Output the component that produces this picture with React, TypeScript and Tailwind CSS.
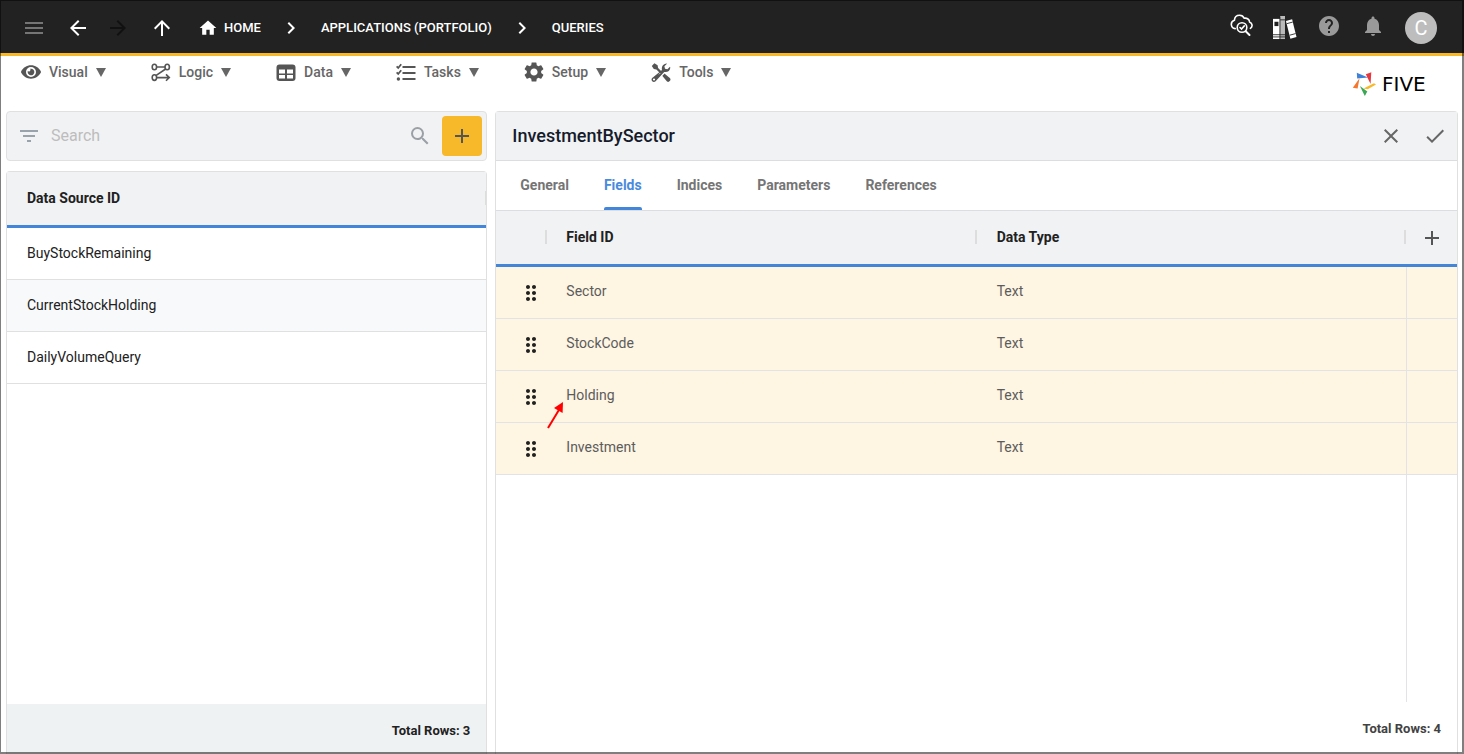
import React, { useState } from "react";
import {
  MdAdd,
  MdArrowBack,
  MdArrowForward,
  MdArrowUpward,
  MdCheck,
  MdChevronRight,
  MdClose,
  MdDragIndicator,
  MdFilterList,
  MdHelp,
  MdHome,
  MdMenu,
  MdNotifications,
  MdSearch,
  MdSettings,
} from "react-icons/md";
import { FaEye } from "react-icons/fa";

interface Field {
  id: string;
  type: string;
}

const dataSources = ["BuyStockRemaining", "CurrentStockHolding", "DailyVolumeQuery"];

const fields: Field[] = [
  { id: "Sector", type: "Text" },
  { id: "StockCode", type: "Text" },
  { id: "Holding", type: "Text" },
  { id: "Investment", type: "Text" },
];

const tabs = ["General", "Fields", "Indices", "Parameters", "References"];

const LogicIcon = () => (
  <svg viewBox="0 0 20 20" className="size-5" fill="none" stroke="currentColor" strokeWidth="1.6">
    <ellipse cx="3.4" cy="5" rx="2.2" ry="2.8" />
    <ellipse cx="16.2" cy="5" rx="2.2" ry="2.8" />
    <ellipse cx="3.4" cy="15.6" rx="2.2" ry="2.8" />
    <path d="M5.6 5h8.4M14.6 7L5.2 13.400M5.6 15.600h12.600M15 12.400L18.300 15.600l-3.300 3.200" />
  </svg>
);

const TableIcon = () => (
  <svg viewBox="0 0 20 20" className="size-5">
    <rect x=".5" y="2.500" width="19" height="16.500" rx="3" fill="currentColor" />
    <path d="M3 7.500h6v4H3zM11 7.500h6v4h-6zM3 13h6v3.500H3zM11 13h6v3.500h-6z" fill="#fff" />
  </svg>
);

const TasksIcon = () => (
  <svg viewBox="0 0 20 20" className="size-5" fill="none" stroke="currentColor">
    <path d="M6.500 5H19.500M6.500 11H19.500M6.500 17H19.500" strokeWidth="2.200" />
    <path d="M.6 4.400l1.600 1.600 3-3.800M.6 10.400l1.600 1.600 3-3.800" strokeWidth="1.800" />
    <circle cx="2.400" cy="17" r="1.700" fill="currentColor" stroke="none" />
  </svg>
);

const ToolsIcon = () => (
  <svg viewBox="0 0 20 20" className="size-5" fill="currentColor">
    <path d="M.8 3.900L3.400 1.300l3.200 2 .5 2.600 4 4-1.700 1.700-4-4-2.600-.5z" />
    <path d="M11.200 13.700l2.200-2.200 5.400 4.600a2.200 2.200 0 0 1-3 3.200z" />
    <path d="M1.200 16.100L11 8.100c-.8-3 .8-6 4.200-6.600l.8.200-2.600 2.600.6 2.400 2.400.6 2.600-2.600.3 1c-.2 3-3 5-6.100 4.200L4.600 19.300c-2.400 2-5.400-1-3.400-3.200z" />
    <path d="M8 12.300l1.200-1.200M10.500 14l2.600-2.600" stroke="#fff" strokeWidth=".8" />
    <circle cx="3" cy="17.500" r="1.100" fill="#fff" />
  </svg>
);

const CloudSearchIcon = () => (
  <svg viewBox="0 0 24 24" className="size-6" fill="none" stroke="currentColor" strokeWidth="1.6" strokeLinecap="round">
    <path d="M6.200 14.600A4.300 4.300 0 0 1 5.400 6.200C5.600 3.200 7.800 1.200 10.600 1.200c2.200 0 3.800 1.200 4.600 3C18.200 3.800 20.400 5.400 20.600 8c2.800 1.200 3.400 4.600.8 6.400" />
    <circle cx="13" cy="13.500" r="4.800" />
    <path d="M16.700 17.200l3.800 3.800" strokeWidth="2" />
    <path d="M11 13.500l1.500 1.600 2.800-3.200" />
  </svg>
);

const BooksIcon = () => (
  <svg viewBox="1 1 25 25" className="size-6" fill="currentColor">
    <path d="M1 4h7v21H1z" />
    <path d="M8.500 1h5v24h-5z" fill="#bbb" />
    <path d="M14.500 6.200l6.400-1.700 4.600 18.300-6.400 1.900z" />
    <path d="M2.500 7h4.200v4.500H2.500z" fill="#222" />
    <path d="M1 20.500h12.500M1 22.800h12.500M8.500 5h5M15.300 9l6.300-1.700M18.400 21l6.200-1.700" stroke="#222" strokeWidth=".9" />
    <path d="M8.200 2v23M14 2v23" stroke="#222" strokeWidth=".6" />
  </svg>
);

const FiveLogo = () => (
  <div className="flex items-center gap-1.5">
    <svg viewBox="0 0 24 24" className="size-6">
      <path d="M4.800.8L16 5.400 5.200 6.400z" fill="#3f80d8" />
      <path d="M19.300.2L18.600 12l-4.800-9.800z" fill="#e5393f" />
      <path d="M24 12.600l-8.300 4.600-4.200-.6L22 11.200z" fill="#f7b829" />
      <path d="M12.800 24L7.900 14l7.400 5.600z" fill="#3aa757" />
      <path d="M.8 15.800L7.500 6.200 5.600 16.500z" fill="#f4772e" />
    </svg>
    <span className="w-15 font-['DejaVu_Sans',sans-serif] text-xl leading-6 text-black">FIVE</span>
  </div>
);

const menus = [
  { label: "Visual", icon: <FaEye className="size-5" /> },
  { label: "Logic", icon: <LogicIcon /> },
  { label: "Data", icon: <TableIcon /> },
  { label: "Tasks", icon: <TasksIcon /> },
  { label: "Setup", icon: <MdSettings className="-mx-0.5 size-6" /> },
  { label: "Tools", icon: <ToolsIcon /> },
];

const Header = () => (
  <header className="flex h-14 shrink-0 items-center justify-between border-b-3 border-[#f7b829] bg-[#222222] pt-0.5 pr-6.75 pl-5.5 text-white">
    <nav className="flex items-center text-[13px] font-medium">
      <button aria-label="Menu" className="mr-5 text-[#757575]">
        <MdMenu className="size-6" />
      </button>
      <button aria-label="Back" className="mr-4">
        <MdArrowBack className="size-6" />
      </button>
      <button aria-label="Forward" className="mr-5 text-[#111111]" disabled>
        <MdArrowForward className="size-6" />
      </button>
      <button aria-label="Up" className="mr-6">
        <MdArrowUpward className="size-6" />
      </button>
      <a href="#home" className="flex items-center gap-1.5">
        <MdHome className="size-5" />
        HOME
      </a>
      <MdChevronRight className="mx-4.5 size-6" />
      <a href="#applications">APPLICATIONS (PORTFOLIO)</a>
      <MdChevronRight className="mx-4.5 size-6" />
      <a href="#queries">QUERIES</a>
    </nav>
    <div className="flex items-center gap-5">
      <button aria-label="Inspect" className="pb-1">
        <CloudSearchIcon />
      </button>
      <button aria-label="Library">
        <BooksIcon />
      </button>
      <button aria-label="Help" className="pb-1 text-[#999999]">
        <MdHelp className="size-6" />
      </button>
      <button aria-label="Notifications" className="pb-1 text-[#999999]">
        <MdNotifications className="size-6" />
      </button>
      <button className="size-8 rounded-full bg-[#bdbdbd] text-xl leading-8">C</button>
    </div>
  </header>
);

const MenuBar = () => (
  <div className="flex h-13.75 shrink-0 justify-between pr-5.5 pl-5.25">
    <div className="flex h-8 items-center gap-11.25">
      {menus.map((menu) => (
        <button key={menu.label} className="flex items-center gap-2 text-sm font-medium text-[#666666]">
          <span className="text-[#555555]">{menu.icon}</span>
          {menu.label}
          <svg viewBox="0 0 10 9" className="h-2.25 w-2.5" fill="currentColor">
            <path d="M0 0h10L5 9z" />
          </svg>
        </button>
      ))}
    </div>
    <div className="pt-4">
      <FiveLogo />
    </div>
  </div>
);

const DataSourceList = () => {
  const [search, setSearch] = useState("");

  const filtered = dataSources.filter((name) =>
    name.toLowerCase().includes(search.toLowerCase()),
  );

  return (
    <section className="flex min-h-0 flex-col gap-2.5">
      <div className="flex h-12.5 shrink-0 items-center rounded border border-[#e0e0e0] bg-[#f1f2f4] pr-1 pl-2.5">
        <button aria-label="Filter" className="text-[#9aa3ab]">
          <MdFilterList className="size-6" />
        </button>
        <input
          type="text"
          aria-label="Search"
          placeholder="Search"
          value={search}
          onChange={(e) => setSearch(e.target.value)}
          className="ml-2.5 min-w-0 flex-1 bg-transparent text-base outline-none placeholder:text-[#bdbdbd]"
        />
        <MdSearch className="mr-2.5 size-6 text-[#9aa0a6]" />
        <button
          aria-label="Add query"
          className="flex size-10 items-center justify-center rounded bg-[#f7b829] text-[#555555]"
        >
          <MdAdd className="size-6" />
        </button>
      </div>

      <div className="flex min-h-0 flex-1 flex-col rounded-t border border-b-0 border-[#e0e0e0]">
        <table className="w-full border-separate border-spacing-0 text-left text-sm">
          <thead>
            <tr>
              <th className="h-14 border-b-3 border-[#4285d9] bg-[#f1f2f4] p-0 pb-0.5">
                <div className="flex items-center justify-between pl-5 font-bold text-[#212121]">
                  Data Source ID
                  <span className="h-3.5 w-px bg-[#dddddd]" />
                </div>
              </th>
            </tr>
          </thead>
          <tbody>
            {filtered.map((name) => (
              <tr key={name} className="even:bg-[#f8f9fb]">
                <td className="h-13 border-b border-[#e0e0e0] px-5 pt-0 pb-0.5 text-[#212121]">{name}</td>
              </tr>
            ))}
          </tbody>
        </table>
        <div className="mt-auto flex h-12.5 items-center justify-end bg-[#eef2f3] px-4 pt-1 text-[13px] font-bold text-[#212121]">
          Total Rows: {filtered.length}
        </div>
      </div>
    </section>
  );
};

const QueryDetails = () => {
  const [activeTab, setActiveTab] = useState("Fields");

  return (
    <section className="flex min-h-0 flex-col rounded-t border border-b-0 border-[#e0e0e0]">
      <div className="flex h-12.25 shrink-0 items-center border-b border-[#dcdde0] bg-[#f1f2f4] pr-2.5 pl-4">
        <h1 className="flex-1 text-lg font-medium text-[#161b2c]">InvestmentBySector</h1>
        <button aria-label="Cancel" className="mr-5 text-[#666666]">
          <MdClose className="size-6" />
        </button>
        <button aria-label="Save" className="text-[#666666]">
          <MdCheck className="size-6" />
        </button>
      </div>

      <div role="tablist" className="flex h-12.5 shrink-0 gap-8.75 border-b border-[#dcdde0] px-6">
        {tabs.map((tab) => (
          <button
            key={tab}
            role="tab"
            aria-selected={tab === activeTab}
            onClick={() => setActiveTab(tab)}
            className={
              tab === activeTab
                ? "relative pb-0.5 text-sm font-bold text-[#4a8add] after:absolute after:inset-x-0 after:bottom-0 after:h-0.75 after:rounded-t-xs after:bg-[#4285d9]"
                : "pb-0.5 text-sm font-bold text-[#757575]"
            }
          >
            {tab}
          </button>
        ))}
      </div>

      <table className="w-full table-fixed border-separate border-spacing-0 text-left text-sm">
        <thead className="bg-[#f1f2f4] text-[#212121]">
          <tr>
            <th className="h-14 w-12.75 border-b-3 border-[#4285d9] p-0 pb-0.5">
              <div className="ml-auto h-3.5 w-0.5 bg-[#dddddd]" />
            </th>
            <th className="border-b-3 border-[#4285d9] p-0 pb-0.5">
              <div className="flex items-center justify-between pl-4.75">
                Field ID
                <span className="h-3.5 w-0.5 bg-[#dddddd]" />
              </div>
            </th>
            <th className="border-b-3 border-[#4285d9] p-0 pb-0.5">
              <div className="flex items-center justify-between pl-5">
                Data Type
                <span className="h-3.5 w-0.5 bg-[#dddddd]" />
              </div>
            </th>
            <th className="w-12.75 border-b-3 border-[#4285d9] p-0">
              <button aria-label="Add field" className="mx-auto block text-[#555555]">
                <MdAdd className="size-6" />
              </button>
            </th>
          </tr>
        </thead>
        <tbody className="bg-[#fef5e3] text-[#5c5c5c]">
          {fields.map((field) => (
            <tr key={field.id}>
              <td className="h-13 border-b border-[#e2e3e6] p-0 pl-5.75">
                <MdDragIndicator className="size-6 text-[#212121]" />
              </td>
              <td className="relative border-b border-[#e2e3e6] pt-0 pb-1 pl-4.75">
                {field.id}
                {field.id === "Holding" && (
                  <svg viewBox="0 0 18 28" className="absolute top-7.5 left-0 h-7 w-4.5">
                    <path d="M1 27L12.500 8" stroke="#ff0000" strokeWidth="2" />
                    <path d="M16 1l-.4 11-8.600-5z" fill="#ff0000" />
                  </svg>
                )}
              </td>
              <td className="border-b border-[#e2e3e6] pt-0 pb-1 pl-5">{field.type}</td>
              <td className="border-b border-l border-[#e2e3e6] p-0" />
            </tr>
          ))}
        </tbody>
      </table>
      <div className="flex flex-1 justify-end">
        <div className="w-12.75 border-l border-[#e2e3e6]" />
      </div>
      <div className="flex h-13 items-center justify-end px-4 pt-0.5 text-[13px] font-bold text-[#424242]">
        Total Rows: {fields.length}
      </div>
    </section>
  );
};

const App: React.FC = () => {
  return (
    <div className="relative flex h-screen flex-col overflow-hidden bg-white font-[Roboto,sans-serif]">
      <Header />
      <MenuBar />
      <main className="grid min-h-0 flex-1 grid-cols-[1fr_2fr] gap-2 px-1.5">
        <DataSourceList />
        <QueryDetails />
      </main>
      <div className="pointer-events-none absolute inset-0 border border-r-2 border-b-2 border-black/50" />
    </div>
  );
};

export default App;
